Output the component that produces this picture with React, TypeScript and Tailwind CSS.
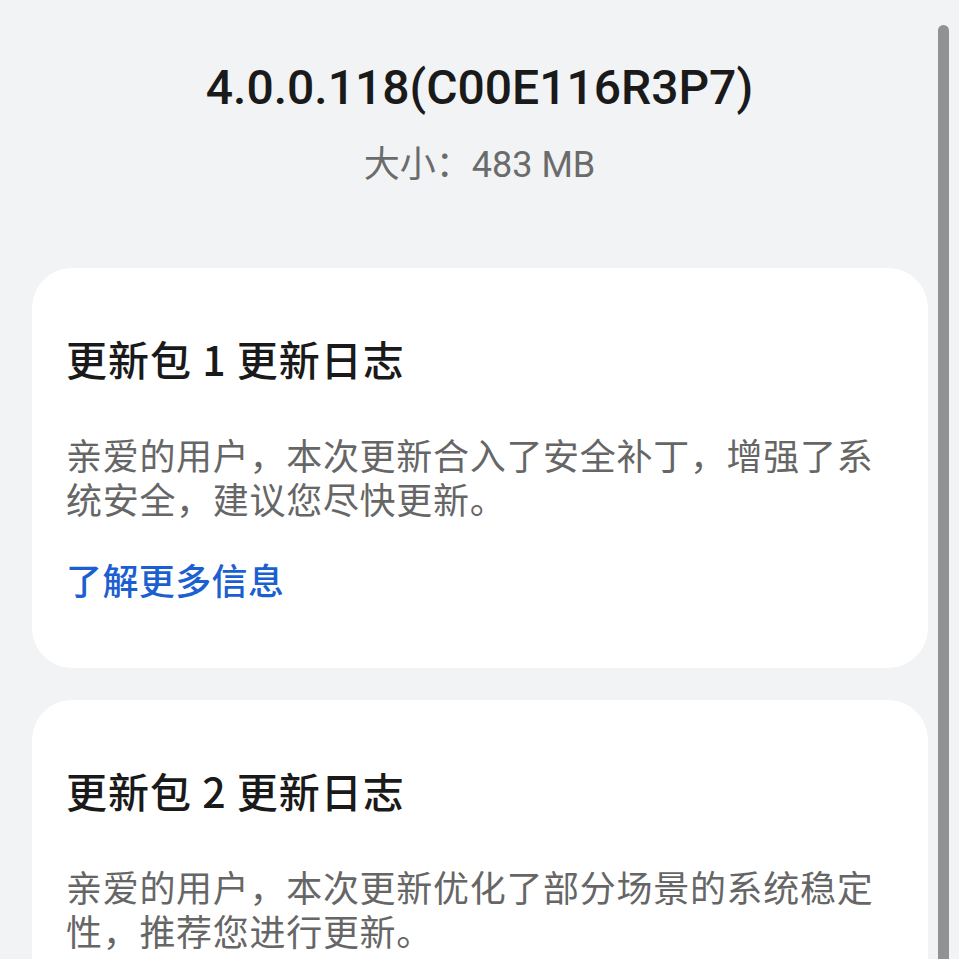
import React from "react";

const cjk = "font-['Noto_Sans_CJK_SC','Noto_Sans',sans-serif]";

function Card({ title, body, link }: { title: string; body: string; link?: string }) {
  return (
    <div className={`rounded-[40px] bg-white px-[34px] pt-[66px] pb-[67px] ${cjk}`}>
      <div className="text-[41px] leading-[48px] font-medium tracking-[1px] text-[#1a1a1a]">{title}</div>
      <div className="mt-[50px] text-[36px] leading-[44px] tracking-[0.7px] text-[#666666]">{body}</div>
      {link && (
        <div className="mt-[37px] text-[36px] leading-[44px] font-medium tracking-[0.4px] text-[#1b5fd1]">{link}</div>
      )}
    </div>
  );
}

export default function App() {
  return (
    <div className="relative h-[959px] w-[959px] overflow-hidden bg-[#f1f3f5]">
      <div className="flex flex-col items-center pt-[60px] font-['Roboto','Noto_Sans_CJK_SC',sans-serif]">
        <div className="text-[48px] leading-[56px] font-medium text-[#1a1a1a]">4.0.0.118(C00E116R3P7)</div>
        <div className="mt-[27px] text-[36px] leading-[44px] text-[#6b6b6b]">大小：483 MB</div>
      </div>
      <div className="mt-[81px] flex flex-col gap-[32px] pl-[32px] pr-[31px]">
        <Card
          title="更新包 1 更新日志"
          body="亲爱的用户，本次更新合入了安全补丁，增强了系统安全，建议您尽快更新。"
          link="了解更多信息"
        />
        <Card
          title="更新包 2 更新日志"
          body="亲爱的用户，本次更新优化了部分场景的系统稳定性，推荐您进行更新。"
        />
      </div>
      <div className="absolute left-[938px] top-[25px] h-[960px] w-[11px] rounded-t-full bg-[#919294]" />
    </div>
  );
}
